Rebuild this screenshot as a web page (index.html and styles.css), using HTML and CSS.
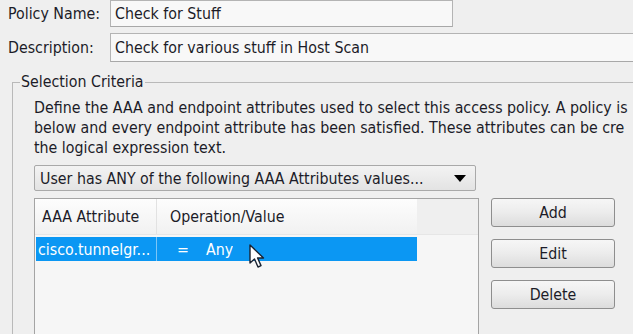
FILE: index.html
```html
<!DOCTYPE html>
<html>
<head>
<meta charset="utf-8">
<link rel="stylesheet" href="styles.css">
</head>
<body>
<div class="page">
  <div class="field-row first">
    <span class="label">Policy Name:</span>
    <div class="input name-input">Check for Stuff</div>
  </div>
  <div class="field-row second">
    <span class="label">Description:</span>
    <div class="input desc-input">Check for various stuff in Host Scan</div>
  </div>
  <fieldset class="criteria">
    <legend>Selection Criteria</legend>
    <p class="intro">
      <span class="line">Define the AAA and endpoint attributes used to select this access policy. A policy is</span>
      <span class="line">below and every endpoint attribute has been satisfied. These attributes can be cre</span>
      <span class="line">the logical expression text.</span>
    </p>
    <div class="select">
      <span class="select-text">User has ANY of the following AAA Attributes values...</span>
      <svg class="select-arrow" width="12" height="7" viewBox="0 0 12 7"><path d="M0 0 H12 L6 7 Z" fill="#000"/></svg>
    </div>
    <div class="table-area">
      <div class="table">
        <div class="thead">
          <div class="th col1">AAA Attribute</div>
          <div class="th col2">Operation/Value</div>
          <div class="th-rest"></div>
        </div>
        <div class="trow selected">
          <div class="td col1">cisco.tunnelgr...</div>
          <div class="td col2"><span class="op">=</span>Any</div>
        </div>
        <svg class="cursor" width="20" height="26" viewBox="0 0 20 26">
          <path d="M1 1 L1 19 L5.5 15 L9 23 L12 21.6 L8.6 14 L14.5 14 Z" fill="#fff" stroke="#1a2230" stroke-width="1.4" stroke-linejoin="round"/>
        </svg>
      </div>
      <div class="buttons">
        <div class="btn">Add</div>
        <div class="btn">Edit</div>
        <div class="btn">Delete</div>
      </div>
    </div>
  </fieldset>
</div>
</body>
</html>
```
FILE: styles.css
```css
html, body {
  margin: 0;
  padding: 0;
  background: #efefef;
  overflow: hidden;
}
.page {
  width: 633px;
  height: 334px;
  overflow: hidden;
  font-family: "DejaVu Sans Condensed", "DejaVu Sans", sans-serif;
  font-size: 15.8px;
  color: #1c1c28;
}
.field-row {
  display: flex;
  align-items: center;
  padding-left: 8px;
  white-space: nowrap;
}
.field-row.first {
  height: 27px;
}
.field-row.second {
  margin-top: 6px;
  height: 29px;
}
.label {
  width: 102px;
  flex: none;
}
.input {
  box-sizing: border-box;
  border: 1px solid #b4b4b4;
  border-bottom-color: #a8a8a8;
  background: #f8f8f8;
  padding-left: 4px;
  display: flex;
  align-items: center;
  flex: none;
}
.name-input {
  width: 343px;
  height: 27px;
}
.desc-input {
  width: 540px;
  height: 29px;
}
.criteria {
  margin: 11px 0 0 12px;
  border: 1px solid #b9b9b9;
  border-right: none;
  border-bottom: none;
  padding: 0 0 0 21px;
  min-width: 0;
  height: 400px;
}
.criteria legend {
  padding: 0 1px;
  margin-left: -14px;
  line-height: 18px;
}
.intro {
  margin: 7px 0 0 0;
  line-height: 20px;
  white-space: nowrap;
}
.line {
  display: block;
}
.select {
  box-sizing: border-box;
  margin-top: 7px;
  width: 442px;
  height: 26px;
  border: 1px solid #a9a9a9;
  border-radius: 2px;
  background: linear-gradient(#f3f3f3, #e3e3e3);
  display: flex;
  align-items: center;
  justify-content: space-between;
  padding: 0 9px 0 5px;
  white-space: nowrap;
}
.select-arrow {
  display: block;
  margin-top: 1px;
}
.table-area {
  display: flex;
  margin-top: 7px;
  align-items: flex-start;
}
.table {
  position: relative;
  box-sizing: border-box;
  width: 445px;
  height: 200px;
  border: 1px solid #a4a4a4;
  background: #f6f6f6;
  flex: none;
}
.thead {
  display: flex;
  height: 35px;
  border-bottom: 1px solid #e6e6e6;
}
.th {
  box-sizing: border-box;
  display: flex;
  align-items: center;
  background: linear-gradient(#fdfdfd, #f1f1f1);
  white-space: nowrap;
}
.th.col1 {
  width: 122px;
  padding-left: 7px;
  border-right: 1px solid #e2e2e2;
}
.th.col2 {
  width: 260px;
  padding-left: 13px;
}
.th-rest {
  flex: 1;
  background: #efefef;
}
.trow {
  display: flex;
  height: 24px;
  margin: 2px 0 0 1px;
  width: 381px;
}
.trow.selected {
  background: #0b97f3;
  color: #ffffff;
}
.td {
  box-sizing: border-box;
  display: flex;
  align-items: center;
  white-space: nowrap;
  overflow: hidden;
}
.td.col1 {
  width: 121px;
  padding-left: 2px;
  border-right: 1px solid #7cc6f7;
}
.td.col2 {
  padding-left: 20px;
}
.op {
  margin-right: 17px;
}
.cursor {
  position: absolute;
  left: 214px;
  top: 45px;
}
.buttons {
  display: flex;
  flex-direction: column;
  gap: 12px;
  margin: 0 0 0 12px;
}
.btn {
  box-sizing: border-box;
  width: 124px;
  height: 29px;
  border: 1px solid #8e8e8e;
  border-radius: 3px;
  background: linear-gradient(#f6f6f6 0%, #ececec 50%, #dcdcdc 100%);
  display: flex;
  align-items: center;
  justify-content: center;
}
```
